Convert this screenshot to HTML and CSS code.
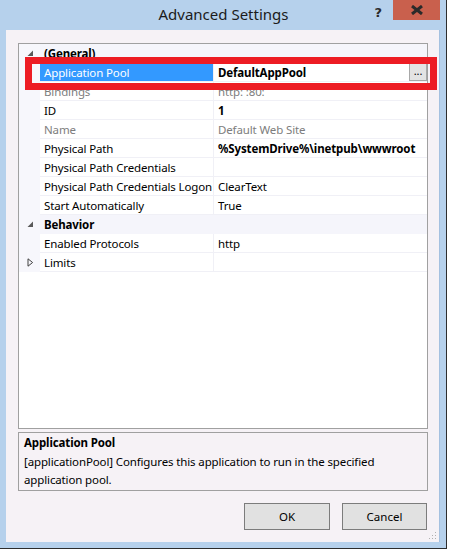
FILE: index.html
```html
<!DOCTYPE html>
<html>
<head>
<meta charset="utf-8">
<title>Advanced Settings</title>
<link rel="stylesheet" href="styles.css">
</head>
<body>
<div class="screen">
  <div class="window">
    <div class="titlebar">
      <div class="tb-side"></div>
      <div class="title">Advanced Settings</div>
      <div class="tb-side controls">
        <span class="help">?</span>
        <span class="close"><svg width="14" height="10" viewBox="0 0 14 10"><path d="M2 1 L12 9 M12 1 L2 9" stroke="#2a2a2a" stroke-width="3"/></svg></span>
      </div>
    </div>
    <div class="client">
      <div class="grid">
        <div class="row cat">
          <span class="gut"><svg width="7" height="7" viewBox="0 0 7 7"><path d="M6 0.5 L6 6 L0.5 6 Z" fill="#595959"/></svg></span>
          <span class="cell label bold">(General)</span>
        </div>
        <div class="row">
          <span class="gut"></span>
          <span class="cell label sel">Application Pool</span>
          <span class="cell value bold">DefaultAppPool<span class="dots">...</span></span>
        </div>
        <div class="row">
          <span class="gut"></span>
          <span class="cell label ro">Bindings</span>
          <span class="cell value ro">http: :80:</span>
        </div>
        <div class="row">
          <span class="gut"></span>
          <span class="cell label">ID</span>
          <span class="cell value bold">1</span>
        </div>
        <div class="row">
          <span class="gut"></span>
          <span class="cell label ro">Name</span>
          <span class="cell value ro">Default Web Site</span>
        </div>
        <div class="row">
          <span class="gut"></span>
          <span class="cell label">Physical Path</span>
          <span class="cell value bold">%SystemDrive%\inetpub\wwwroot</span>
        </div>
        <div class="row">
          <span class="gut"></span>
          <span class="cell label">Physical Path Credentials</span>
          <span class="cell value"></span>
        </div>
        <div class="row">
          <span class="gut"></span>
          <span class="cell label">Physical Path Credentials Logon</span>
          <span class="cell value">ClearText</span>
        </div>
        <div class="row">
          <span class="gut"></span>
          <span class="cell label">Start Automatically</span>
          <span class="cell value">True</span>
        </div>
        <div class="row cat">
          <span class="gut"><svg width="7" height="7" viewBox="0 0 7 7"><path d="M6 0.5 L6 6 L0.5 6 Z" fill="#595959"/></svg></span>
          <span class="cell label bold">Behavior</span>
        </div>
        <div class="row">
          <span class="gut"></span>
          <span class="cell label">Enabled Protocols</span>
          <span class="cell value">http</span>
        </div>
        <div class="row">
          <span class="gut"><svg width="7" height="9" viewBox="0 0 7 9"><path d="M1 0.8 L5.6 4.5 L1 8.2 Z" fill="none" stroke="#404040" stroke-width="1"/></svg></span>
          <span class="cell label">Limits</span>
          <span class="cell value"></span>
        </div>
      </div>
      <div class="desc">
        <div class="desc-title">Application Pool</div>
        <div class="desc-text">[applicationPool] Configures this application to run in the specified application pool.</div>
      </div>
      <div class="buttons">
        <button class="btn ok">OK</button>
        <button class="btn cancel">Cancel</button>
      </div>
      <svg class="grip" width="10" height="10" viewBox="0 0 10 10">
        <rect x="8" y="2" width="1" height="1" fill="#b0b0b0"/>
        <rect x="5" y="5" width="1" height="1" fill="#b0b0b0"/>
        <rect x="8" y="5" width="1" height="1" fill="#b0b0b0"/>
        <rect x="2" y="8" width="1" height="1" fill="#b0b0b0"/>
        <rect x="5" y="8" width="1" height="1" fill="#b0b0b0"/>
        <rect x="8" y="8" width="1" height="1" fill="#b0b0b0"/>
      </svg>
    </div>
  </div>
  <div class="annotation"></div>
</div>
</body>
</html>
```

FILE: styles.css
```css
* { box-sizing: border-box; }

html, body {
  margin: 0;
  padding: 0;
  background: #ffffff;
}

body {
  font-family: "Noto Sans", "Open Sans", "DejaVu Sans", sans-serif;
  font-size: 11.5px;
  letter-spacing: -0.13px;
  color: #000;
}

.screen {
  position: relative;
  width: 450px;
  height: 551px;
  overflow: hidden;
}

.window {
  width: 447px;
  height: 549px;
  background: #b6d1ec;
  border-right: 1px solid #2d2d2d;
  border-bottom: 1px solid #2d2d2d;
  display: flex;
  flex-direction: column;
}

.titlebar {
  height: 30px;
  display: grid;
  grid-template-columns: 1fr auto 1fr;
  align-items: start;
}

.title {
  font-size: 15px;
  letter-spacing: 0;
  line-height: 29px;
  color: #1b1b1b;
  padding-left: 1px;
}

.controls {
  display: flex;
  justify-content: flex-end;
  align-items: flex-start;
  padding-right: 6px;
}

.help {
  font-family: "DejaVu Sans", sans-serif;
  font-weight: bold;
  font-size: 13px;
  line-height: 13px;
  margin-top: 6px;
  color: #2b2b2b;
  margin-right: 11px;
}

.close {
  width: 47px;
  height: 20px;
  background: #c9604d;
  display: flex;
  align-items: center;
  justify-content: center;
  padding-bottom: 1px;
}

.client {
  position: relative;
  margin: 0 6px;
  height: 512px;
  background: #f6f2f6;
  border-right: 1px solid #a5c1e0;
  padding: 13px 11px 0 12px;
  display: flex;
  flex-direction: column;
}

.grid {
  height: 386px;
  background: #ffffff;
  border: 1px solid #a0a0a0;
  display: flex;
  flex-direction: column;
}

.row {
  display: grid;
  grid-template-columns: 21px 174px 1fr;
  height: 19px;
}

.gut {
  background: #f7f7fc;
  display: flex;
  align-items: center;
  justify-content: center;
  padding-left: 1px;
}

.cell {
  line-height: 20px;
  height: 19px;
  border-bottom: 1px solid #f0f0f6;
  white-space: nowrap;
  overflow: hidden;
}

.label {
  padding-left: 4px;
  border-right: 1px solid #f0f0f6;
}

.value {
  padding-left: 4px;
  display: flex;
  justify-content: space-between;
  align-items: flex-start;
}

.cat {
  background: #f5f5fb;
}

.cat .label {
  grid-column: 2 / 4;
  border-right: none;
  border-bottom-color: #f5f5fb;
}

.bold { font-weight: bold; }

.ro { color: #7d7d7d; }

.sel {
  background: #3399ff;
  color: #ffffff;
}

.dots {
  width: 18px;
  height: 18px;
  margin-top: 0;
  background: #e3e3e3;
  border: 1px solid #a8a8a8;
  font-weight: normal;
  font-size: 11px;
  line-height: 14px;
  text-align: center;
  color: #000;
}

.desc {
  margin-top: 3px;
  height: 59px;
  border: 1px solid #a0a0a0;
  padding: 1px 5px 0 5px;
  line-height: 18.5px;
}

.desc-title {
  font-weight: bold;
}

.desc-text {
  width: 372px;
}

.buttons {
  margin-top: 12px;
  display: flex;
  justify-content: flex-end;
  gap: 12px;
  padding-right: 1px;
}

.btn {
  height: 27px;
  background: #e1e1e1;
  border: 1px solid #7c7c7c;
  font-family: inherit;
  font-size: 11.5px;
  color: #000;
  padding: 0;
}

.ok { width: 86px; }
.cancel { width: 85px; }

.grip {
  position: absolute;
  right: 2px;
  bottom: 2px;
}

.annotation {
  position: absolute;
  left: 25px;
  top: 57px;
  width: 412px;
  height: 33px;
  border: 7px solid #ed1c24;
}
```
